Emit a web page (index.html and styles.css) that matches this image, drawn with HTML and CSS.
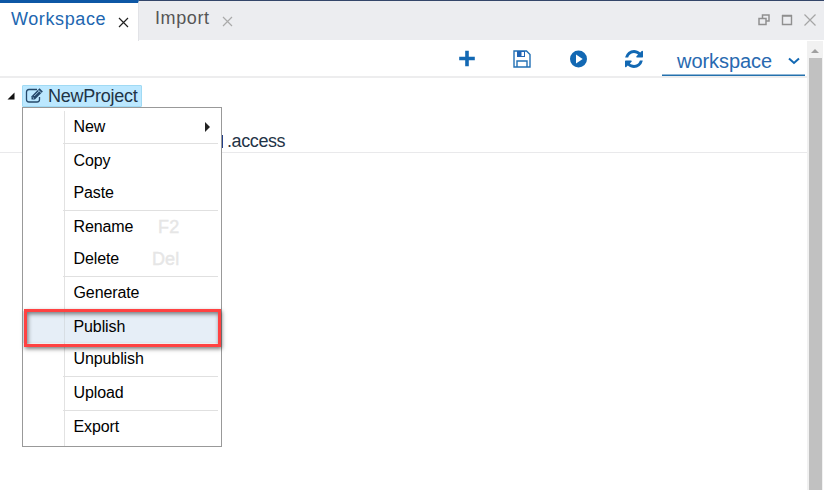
FILE: index.html
```
<!DOCTYPE html>
<html lang="en">
<head>
<meta charset="utf-8">
<title>Workspace</title>
<link rel="stylesheet" href="styles.css">
</head>
<body>
<div class="app">
  <header class="tabs">
    <div class="tab active"><span class="label">Workspace</span><svg class="close" width="11" height="11" viewBox="0 0 11 11"><path d="M1 1l9 9M10 1l-9 9"/></svg></div>
    <div class="tab"><span class="label import">Import</span><svg class="close" width="11" height="11" viewBox="0 0 11 11"><path d="M1 1l9 9M10 1l-9 9"/></svg></div>
    <div class="window-actions">
      <svg width="12" height="12" viewBox="0 0 12 12"><path d="M4.500 4V1h6.500v6H8M1 4.500h7v6H1z" stroke-width="1.500"/></svg>
      <svg width="12" height="12" viewBox="0 0 12 12"><path d="M1 1.500h10M1.500 1v9.500h9V1" /><path d="M1 2h10"/></svg>
      <svg class="thin" width="12" height="12" viewBox="0 0 12 12"><path d="M.5 .5l11 11M11.500 .5l-11 11"/></svg>
    </div>
  </header>
  <div class="body">
    <main class="panel">
      <div class="toolbar">
        <svg width="18" height="18" viewBox="0 0 18 18"><path d="M10 2.500v12M4 8.500h12" stroke="#1268b3" stroke-width="3.600" stroke-linecap="square"/></svg>
        <svg width="18" height="18" viewBox="0 0 18 18"><path d="M1 1h12.500L17 4.500V17H1z" fill="none" stroke="#2270b5" stroke-width="1.400"/><path d="M4 1h8v6H4z" fill="#1f64b5"/><path d="M8.500 2h2.500v4H8.500z" fill="#fff"/><path d="M4 17v-6h10v6" fill="none" stroke="#2270b5" stroke-width="1.400"/></svg>
        <svg width="18" height="18" viewBox="0 0 18 18"><circle cx="9.500" cy="9" r="8.500" fill="#1268b3"/><path d="M7 4.500L13.700 9l-6.700 4.500z" fill="#fff"/></svg>
        <svg width="18" height="18" viewBox="0 0 1536 1536"><path fill="#1268b3" d="M1511 928q0 5-1 7-64 268-268 434.500T764 1536q-146 0-282.500-55T238 1324l-129 129q-19 19-45 19t-45-19-19-45V960q0-26 19-45t45-19h448q26 0 45 19t19 45-19 45l-137 137q71 66 161 102t187 36q134 0 250-65t186-179q11-17 53-117 8-23 30-23h192q13 0 22.500 9.500t9.500 22.500zm25-800v448q0 26-19 45t-45 19h-448q-26 0-45-19t-19-45 19-45l138-138Q969 256 768 256q-134 0-250 65T332 500q-11 17-53 117-8 23-30 23H50q-13 0-22.500-9.500T18 608v-7q65-268 270-434.500T768 0q146 0 284 55.500T1297 212l130-129q19-19 45-19t45 19 19 45z"/></svg>
        <div class="select"><span>workspace</span><svg width="12" height="8" viewBox="0 0 12 8"><path d="M1 1.500l5 4.500 5-4.500" fill="none" stroke="#1268b3" stroke-width="2"/></svg></div>
      </div>
      <div class="tree">
        <div class="node">
          <svg class="twisty" width="8" height="8" viewBox="0 0 8 8"><path d="M7.500 .5v7H.5z" fill="#111"/></svg>
          <div class="project">
            <svg width="20" height="16" viewBox="0 0 20 16"><path d="M12 1.500H4Q1.500 1.500 1.500 4v7.500Q1.500 14 4 14h8q2.500 0 2.500-2.500V9" fill="none" stroke="#24486a" stroke-width="1.300"/><path d="M6.500 11.500V8.300L14.500.3l3.400 3.200-8 8z" fill="#24486a"/><path d="M7.700 9.300l1.400 1.400M9.200 8l5-5M13.200 1.800l3.200 3.200" stroke="#bce8ff" stroke-width=".8"/></svg>
            <span>NewProject</span>
          </div>
          <div class="menu">
            <div class="item">New<svg class="more" width="5" height="10" viewBox="0 0 5 10"><path d="M0 0l5 5-5 5z"/></svg></div>
            <div class="sep first"></div>
            <div class="item">Copy</div>
            <div class="item">Paste</div>
            <div class="sep"></div>
            <div class="item">Rename<span class="key">F2</span></div>
            <div class="item">Delete<span class="key">Del</span></div>
            <div class="sep"></div>
            <div class="item">Generate</div>
            <div class="sep"></div>
            <div class="item selected">Publish<div class="highlight"></div></div>
            <div class="item">Unpublish</div>
            <div class="sep"></div>
            <div class="item">Upload</div>
            <div class="sep"></div>
            <div class="item">Export</div>
          </div>
        </div>
        <div class="file"><i></i>.access</div>
      </div>
    </main>
    <div class="scrollbar"><svg width="8" height="4" viewBox="0 0 8 4"><path d="M0 4l4-4 4 4z" fill="#a0a0a0"/></svg><div class="thumb"></div></div>
  </div>
</div>
</body>
</html>
```
FILE: styles.css
```
* { box-sizing: border-box; }
body { margin: 0; font-family: "Liberation Sans", Arial, sans-serif; background: #fff; overflow: hidden; }
svg { display: block; flex: none; }
.app { height: 490px; display: flex; flex-direction: column; }
.tabs { height: 40px; display: flex; background: #ecedf0; border-top: 1px solid #34466a; flex: none; }
.tab { display: flex; padding: 4px 0 0 16px; color: #555; font-size: 18px; line-height: 26px; letter-spacing: .6px; }
.tab.active { width: 139px; margin-top: -1px; height: 41px; padding: 3px 0 0 11px; background: #fff; color: #2166b0; border-top: 3px solid #0d57a5; border-right: 1px solid #e2e3e7; }
.label { width: 94px; margin-right: 13px; }
.label.import { width: 54px; margin-right: 13px; }
.close { margin-top: 11px; fill: none; stroke: #aaa; stroke-width: 1.2; }
.active .close { stroke: #222; }
.window-actions { margin-left: auto; display: flex; gap: 11px; padding: 13px 8px 0 0; fill: none; stroke: #909090; stroke-width: 1.4; }
.window-actions .thin { stroke: #a5a5a5; stroke-width: 1.2; }
.body { flex: 1; display: flex; min-height: 0; }
.panel { flex: 1; }
.toolbar { height: 38px; display: flex; justify-content: flex-end; align-items: center; gap: 38px; padding-right: 2px; border-bottom: 2px solid #ededee; }
.toolbar > svg { margin-top: 2px; }
.select { width: 143px; height: 32px; margin: 4px 0 0 -19px; display: flex; align-items: center; justify-content: space-between; padding: 3px 5px 0 15px; border-bottom: 1px solid #2471ad; box-shadow: inset 0 -.5px #2471ad; color: #2869b0; font-size: 20px; line-height: 24px; letter-spacing: -.05px; align-self: flex-start; }
.select span { position: relative; top: -.5px; }
.tree { padding-top: 7px; height: 75px; border-bottom: 1px solid #e9e9eb; color: #1f3447; font-size: 18px; letter-spacing: -.25px; }
.node { position: relative; display: flex; align-items: center; height: 22px; padding-left: 7px; }
.twisty { margin-right: 7px; }
.project { display: flex; align-items: center; width: 120px; height: 22px; padding-left: 2px; background: #bce8ff; border: 1px solid #a0daf4; border-radius: 1px; gap: 3px; white-space: nowrap; }
.file { display: flex; align-items: center; height: 20px; margin: 24px 0 0 221px; letter-spacing: -.4px; }
.file i { width: 2px; height: 13px; margin-right: 4px; background: #233f88; }
.menu { position: absolute; left: 22px; top: 22px; width: 200px; height: 340px; padding: 3px 3px 0 0; border: 1px solid #999; background: linear-gradient(#e2e2e2, #e2e2e2) 41px 3px / 1px 100% no-repeat #fff; color: #000; font-size: 16px; letter-spacing: -.1px; z-index: 2; }
.item { position: relative; display: flex; align-items: center; height: 32px; padding-left: 50.5px; }
.more { margin-left: auto; margin-right: 8px; fill: #222; }
.sep { height: 2px; margin-left: 40px; border-bottom: 1px solid #e0e0e0; }
.sep.first { border-bottom: 0; border-top: 1px solid #e0e0e0; }
.key { position: absolute; right: 38.5px; color: #e6e6e6; font-size: 18px; letter-spacing: .2px; -webkit-text-stroke: .4px #e6e6e6; }
.selected { background: linear-gradient(#d8dee4, #d8dee4) 41px 0 / 1px 100% no-repeat #e6eef7; margin-right: -2px; }
.highlight { position: absolute; left: 1px; right: -1px; top: -2px; height: 38px; border: 3px solid #ff4242; box-shadow: 1px 2px 4px rgba(0,0,0,.5), inset 1px 2px 4px rgba(0,0,0,.5); z-index: 1; }
.scrollbar { width: 17px; display: flex; flex-direction: column; align-items: center; background: #f1f1f1; border-right: 1px solid #fff; padding-top: 8px; margin-top: 1px; }
.thumb { width: 13px; flex: 1; margin-top: 5px; background: #c1c1c1; }
```
